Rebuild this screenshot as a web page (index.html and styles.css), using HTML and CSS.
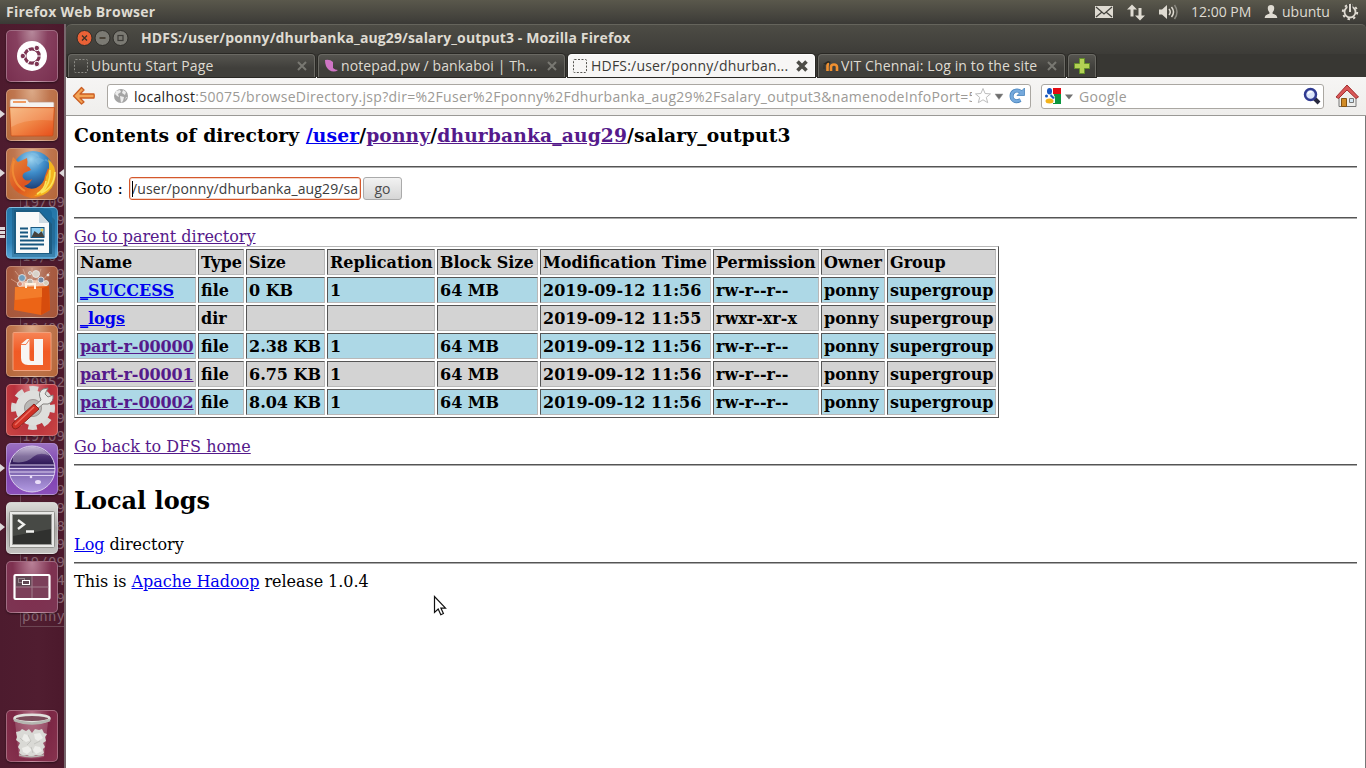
FILE: index.html
```html
<!DOCTYPE html>
<html lang="en">
<head>
<meta charset="utf-8">
<title>HDFS:/user/ponny/dhurbanka_aug29/salary_output3</title>
<link rel="stylesheet" href="styles.css">
</head>
<body>
<header class="panel">
  <span class="panel-title">Firefox Web Browser</span>
  <svg class="panel-icons" width="70" height="24" viewBox="0 0 70 24">
    <rect x="1" y="6" width="18" height="12" fill="#dfdbd2"/>
    <path d="M2 7l8 7 8-7M2 17l6-5M18 17l-6-5" fill="none" stroke="#45443e" stroke-width="1.3"/>
    <path d="M37.500 4.500l-5 5h3.500v7h3v-7h3.500z" fill="#dfdbd2" transform="translate(.5 0)"/>
    <path d="M46 20.500l-5-5h3.500v-7.500h3v7.500h3.500z" fill="#dfdbd2"/>
  </svg>
  <svg class="panel-sound" width="22" height="24" viewBox="0 0 22 24">
    <path d="M1 9.500h3l5-4.500v14l-5-4.500H1z" fill="#dfdbd2"/>
    <path d="M11 9q2.500 3 0 6M13.500 7q4 5 0 10" fill="none" stroke="#dfdbd2" stroke-width="1.500"/>
    <path d="M16.500 5q5 7 0 14" fill="none" stroke="#8b8981" stroke-width="1.500"/>
  </svg>
  <span class="clock">12:00 PM</span>
  <svg class="panel-user" width="14" height="24" viewBox="0 0 14 24">
    <path d="M7 5c-2.200 0-3.400 1.500-3.200 3.500.1 2 .8 3 1.600 3.700v1.500C3 14.500.9 15 .7 18h12.600c-.2-3-2.300-3.500-4.700-4.300v-1.500c.8-.7 1.500-1.700 1.600-3.700C10.400 6.500 9.200 5 7 5z" fill="#dfdbd2"/>
  </svg>
  <span class="user">ubuntu</span>
  <svg class="panel-gear" width="18" height="24" viewBox="0 0 18 24">
    <circle cx="9" cy="12" r="5.500" fill="none" stroke="#dfdbd2" stroke-width="1.800"/>
    <circle cx="9" cy="12" r="7.200" fill="none" stroke="#dfdbd2" stroke-width="2" stroke-dasharray="2.400 3.250"/>
    <rect x="6.500" y="4" width="5" height="6" fill="#45443e"/>
    <path d="M9 4v8" stroke="#dfdbd2" stroke-width="2"/>
  </svg>
</header>

<div class="desktop">
<nav class="launcher">
  <div class="ghost"><i>19/09</i><i>19/09</i><i>19/09</i><i>19/09</i><i>19/09</i><i>19/09</i><i>19/09</i><i>19/09</i><i>19/09</i><i>19/09</i><i>20952</i><i>19/09</i><i>19/09</i><i>19/09</i><i>19/09</i><i>19/09</i><i>19/09</i><i>19/09</i><i>&nbsp;&nbsp;&nbsp;&nbsp;8</i><i>19/09</i><i>19/09</i><i>&nbsp;1264</i><i>19/09</i><i>ponny</i></div>
  <div class="tile t-dash"><svg viewBox="0 0 52 52">
    <circle cx="26" cy="26" r="15" fill="#fff"/>
    <circle cx="26" cy="26" r="7.200" fill="none" stroke="#7d3553" stroke-width="3.200"/>
    <g stroke="#fff" stroke-width="1.200"><path d="M26 26h9M26 26l-4.500-7.800M26 26l-4.500 7.800"/></g><circle cx="26" cy="26" r="5" fill="#fff"/>
    <g fill="#7d3553" stroke="#fff" stroke-width="1"><circle cx="16.800" cy="26" r="2.700"/><circle cx="30.800" cy="18" r="2.700"/><circle cx="30.800" cy="34" r="2.700"/></g>
  </svg></div>
  <div class="tile t-orange run"><svg viewBox="0 0 52 52">
    <defs><linearGradient id="fold" x1="0" y1="0" x2="1" y2="1"><stop offset="0" stop-color="#f6b173"/><stop offset=".5" stop-color="#f08545"/><stop offset="1" stop-color="#e64d19"/></linearGradient></defs>
    <path d="M4 18v-6q0-2 2-2h14q2 0 3 3h24q1 0 1 1v5z" fill="#f5f3f1" stroke="#b98e78" stroke-width=".7"/>
    <rect x="7" y="12" width="13" height="2" fill="#ef9b62"/>
    <path d="M3.500 18.500h45L47 46q0 1-1 1H6q-1 0-1-1z" fill="url(#fold)" stroke="#c8501c" stroke-width=".8"/>
    <path d="M4.500 19.500h43l-.7 12Q20 29 5.300 38z" fill="#fff" opacity=".15"/>
  </svg></div>
  <div class="tile t-orange run active"><svg viewBox="0 0 52 52">
    <defs><radialGradient id="globe" cx=".45" cy=".2" r=".85"><stop offset="0" stop-color="#9fd5f0"/><stop offset=".4" stop-color="#3e8cc9"/><stop offset="1" stop-color="#10275f"/></radialGradient>
    <linearGradient id="fox" x1="0" y1="0" x2="1" y2="1"><stop offset="0" stop-color="#e98a3a"/><stop offset=".5" stop-color="#dd5420"/><stop offset="1" stop-color="#f2a01f"/></linearGradient></defs>
    <circle cx="27" cy="23.500" r="20.500" fill="url(#globe)"/>
    <path d="M24 5q8-1 9 4l-5 3 4 5 8-6 6 5" fill="#8fc8e8" opacity=".35"/>
    <path d="M7 9l5 5q5-2 9-4 1 4 0 8 3 1 4 4l-7 3q-3 3 0 6 3 3 8 0-2 5-8 7 5 4 12 2 8-4 9-12l3-8 3 5q2 14-5 20-6 5-15 5Q11 47 5 37 1 28 7 9z" fill="url(#fox)"/>
    <path d="M40 29q5-8 2-18 8 6 7.500 18-1.500 13-12.500 18l-9 1q12-6 12-19z" fill="#f4b51e"/>
    <path d="M44 22q1 14-9 23 13-5 14-21M40 33q-1 8-9 13" fill="none" stroke="#fbe45b" stroke-width="1.600"/>
    <path d="M8 13q-3 10 1 19 3 7 10 11" fill="none" stroke="#f08a35" stroke-width="2"/>
  </svg></div>
  <div class="tile t-blue many"><svg viewBox="0 0 52 52">
    <path d="M6 1h31l12 12v37H6z" fill="#164b6b" opacity=".35"/>
    <path d="M8 3h27l11 13v31H8z" fill="#1d5c82"/>
    <path d="M10 5h23l10 11v30H10z" fill="#f9fafa"/>
    <path d="M32 2l14 15V7q0-5-5-5z" fill="#1a6a9d"/><path d="M33 5v11h10z" fill="#cfdce4"/>
    <path d="M14 21.500h8M14 25.500h8M14 29.500h8M14 33.500h24M14 37.500h24M14 41.500h18" stroke="#17567f" stroke-width="2"/>
    <rect x="25" y="20.500" width="13" height="10" fill="#8ccdf2" stroke="#17567f"/>
    <path d="M25.500 30l3-6 4 3 3-3 3 6z" fill="#46423d"/><circle cx="36" cy="23" r="1.500" fill="#eecb55"/>
  </svg></div>
  <div class="tile t-brown"><svg viewBox="0 0 52 52">
    <path d="M26 26L9 5m17 21L17 3m9 23L26 2m0 24L35 3m-9 23L44 6M26 26L5 13" stroke="#e8b79e" stroke-width="1" opacity=".6"/>
    <ellipse cx="27" cy="20" rx="14" ry="6" fill="#ffe0ca" opacity=".75"/>
    <g stroke="#eee" stroke-width=".8"><circle cx="16" cy="12" r="3.500" fill="#729ebc"/><circle cx="24" cy="16" r="3" fill="#bab5ac"/><circle cx="30" cy="8" r="3.500" fill="#d8d2c9"/><circle cx="35" cy="14" r="3" fill="#7789a2"/><circle cx="14" cy="18" r="2.500" fill="#d98c76"/><circle cx="40" cy="17" r="2.500" fill="#d4ccb8"/><circle cx="24" cy="7" r="1.500" fill="#bcaa9b"/><circle cx="42" cy="9" r="1" fill="#ddd"/></g>
    <path d="M9 21l34-1 1 24-9 5L8 44z" fill="#ec6416"/><path d="M36 22l7-2 1 24-9 5z" fill="#d64c0d"/>
    <path d="M9 21l27 1v9L9 34z" fill="#f37c2a"/>
    <path d="M20 22v-4h9v5" fill="none" stroke="#fff2df" stroke-width="2"/>
  </svg></div>
  <div class="tile t-orange"><svg viewBox="0 0 52 52">
    <defs><linearGradient id="one" x1="0" y1="0" x2="0" y2="1"><stop offset="0" stop-color="#f68455"/><stop offset=".5" stop-color="#f15a25"/><stop offset="1" stop-color="#ef6129"/></linearGradient></defs>
    <rect x="7" y="7.500" width="38" height="38" rx="1" fill="url(#one)" stroke="#f1a17c"/>
    <path d="M15 19l6-5h2.500v20q0 2 2 2h2.500V14h9v26H22q-7 0-7-7z" fill="#f8f5f3"/><path d="M15 19.500h5l3.500-5" fill="none" stroke="#f15a25" stroke-width=".8"/>
  </svg></div>
  <div class="tile t-red"><svg viewBox="0 0 52 52">
    <circle cx="27" cy="24" r="19" fill="none" stroke="#d9d9d7" stroke-width="6" stroke-dasharray="8.500 6.420" stroke-dashoffset="4"/>
    <circle cx="27" cy="24" r="13" fill="none" stroke="#dededc" stroke-width="9"/>
    <circle cx="27" cy="24" r="8.500" fill="#b9b8b6" stroke="#9c9a98"/>
    <path d="M27 23l8-7q-4-8 2-11l5-1-3 6 3 3 5-2q1 7-5 9l-5 0-7 6z" fill="#e8e8e6" stroke="#83817f" stroke-width="1"/>
    <path d="M28 20l5 5-21 19q-3 2-5 0-2-3 0-5z" fill="#cf3127" stroke="#8f211b"/><path d="M28 23L9 41" stroke="#ed6b5e" stroke-width="1.500"/>
  </svg></div>
  <div class="tile t-purple run"><svg viewBox="0 0 52 52">
    <defs><linearGradient id="ecl" x1="0" y1="0" x2="0" y2="1"><stop offset="0" stop-color="#b9a6cf"/><stop offset=".22" stop-color="#4f3575"/><stop offset=".4" stop-color="#2d1856"/><stop offset=".52" stop-color="#7a62ab"/><stop offset="1" stop-color="#b39be3"/></linearGradient></defs>
    <circle cx="26" cy="26" r="23" fill="url(#ecl)" stroke="#d9cdeb" stroke-width="1"/>
    <path d="M7 13Q16 3 28 4q10 1 16 9-10-5-17 1-7 7-20 5z" fill="#fff" opacity=".3"/>
    <path d="M3.500 22h45M3 25.500h46M3 29h46M4 32.500h44" stroke="#ddcff0" stroke-width="1.200"/>
    <ellipse cx="32" cy="39" rx="3" ry="2" fill="#e9ddf8"/><circle cx="25" cy="34" r="1.300" fill="#e9ddf8"/>
  </svg></div>
  <div class="tile t-grey run"><svg viewBox="0 0 52 52">
    <rect x="3.500" y="9.500" width="45" height="36" rx="1" fill="#e9e9e7" stroke="#92928e"/>
    <rect x="6.500" y="12.500" width="39" height="30" fill="#30312f" stroke="#9b9b98"/>
    <path d="M7 13h38v14L7 34z" fill="#5b5c58" opacity=".55"/>
    <path d="M12 18l6 4.500-6 4.500M20 29.500h8" fill="none" stroke="#f1f1ef" stroke-width="2.300"/>
  </svg></div>
  <div class="tile t-wine"><svg viewBox="0 0 52 52">
    <rect x="8.500" y="14" width="35" height="24" rx="1" fill="#7c405a" stroke="#fff" stroke-width="2.200"/>
    <rect x="10" y="15.500" width="15.500" height="10" fill="#5f4853"/>
    <path d="M26 15v22M10 26h32.500" stroke="#a07e8c" stroke-width="1"/>
    <rect x="12.500" y="17.500" width="6" height="4" fill="none" stroke="#97858c"/><rect x="16.500" y="19.500" width="7" height="4" fill="#5f4853" stroke="#fff"/>
  </svg></div>
  <div class="tile t-trash"><svg viewBox="0 0 52 52">
    <path d="M9 12l4 35q13 3 25 0l4-35z" fill="#d5a5b3" opacity=".3"/>
    <path d="M10 22l4-1 2-2 4 2 3-2 3 4 3-4 4 1 3-1 2 4 3 1-2 3 1 4-3 2 2 4-2 2 1 4-4 3-4-1-5 2-4-2-4 1-4-3 1-3-2-3 2-4-4-3 1-3z" fill="#d9d9d5"/>
    <path d="M18 24l4 1 3 5-5 2-4-3zM28 24l6-1 3 5-5 3-3-2zM16 38l6-2 4 4-5 4-4-2zM29 36l5 1 2 4-6 3-3-4z" fill="#ededea"/>
    <path d="M22 25l3 6-4 4M34 31l-6 3M25 37l2 6M14 28l3 3" fill="none" stroke="#bdbdb8" stroke-width=".8"/>
    <path d="M13 45q12 3.500 25 0" fill="none" stroke="#b7b5b1" stroke-width="1.500"/>
    <ellipse cx="26" cy="8.500" rx="17.500" ry="3.800" fill="#7b4b5a" stroke="#e2e2de" stroke-width="2.500"/>
    <path d="M8 10q18 7 36 0" fill="none" stroke="#b5b7b1" stroke-width="2.500"/>
  </svg></div>
</nav>

<main class="window">
  <div class="titlebar">
    <svg class="wm" width="56" height="18" viewBox="0 0 56 18">
      <g stroke="#2f2e2a"><circle cx="8.500" cy="9" r="7.500" fill="#ea6136"/><circle cx="26.500" cy="9" r="7.500" fill="#7b7a73"/><circle cx="44.500" cy="9" r="7.500" fill="#7b7a73"/></g>
      <path d="M6 6.500l5 5m0-5l-5 5M23.500 9h6" stroke="#3b3226" stroke-width="1.300"/><rect x="42" y="6.500" width="5" height="5" fill="none" stroke="#3c3b37" stroke-width="1.200"/>
    </svg>
    <span class="win-title">HDFS:/user/ponny/dhurbanka_aug29/salary_output3 - Mozilla Firefox</span>
  </div>
  <div class="tabs">
    <div class="tab"><svg width="16" height="16" viewBox="0 0 16 16"><rect x="1.500" y="1.500" width="13" height="13" rx="1" fill="none" stroke="#8b8a84" stroke-dasharray="2 1.500"/></svg><span class="tab-text tx1">Ubuntu Start Page</span><svg class="x" width="12" height="12" viewBox="0 0 12 12"><path d="M2 2l8 8m0-8l-8 8"/></svg></div>
    <div class="tab"><svg width="16" height="16" viewBox="0 0 16 16"><path d="M2 2q5-1 8 2v6q2 2 5 2-4 3-9 0-4-3-4-10z" fill="#cf75c5"/></svg><span class="tab-text tx2">notepad.pw / bankaboi | Th...</span><svg class="x" width="12" height="12" viewBox="0 0 12 12"><path d="M2 2l8 8m0-8l-8 8"/></svg></div>
    <div class="tab current"><svg width="16" height="16" viewBox="0 0 16 16"><rect x="1.500" y="1.500" width="13" height="13" rx="1" fill="none" stroke="#55544f" stroke-dasharray="2 1.500"/></svg><span class="tab-text tx3">HDFS:/user/ponny/dhurban...</span><svg class="x" width="14" height="14" viewBox="0 0 14 14"><path d="M2.500 2.500l9 9m0-9l-9 9"/></svg></div>
    <div class="tab"><svg width="16" height="16" viewBox="0 0 16 16"><path d="M0 6l5-3 3 1-4 3z" fill="#292823"/><path d="M1 7v4" stroke="#302e28"/><path d="M4.500 13V8q0-2 1.500-2M8 13V9q0-2.500 3-2.500T14 9v4" fill="none" stroke="#f09030" stroke-width="2.600"/></svg><span class="tab-text tx4">VIT Chennai: Log in to the site</span><svg class="x" width="12" height="12" viewBox="0 0 12 12"><path d="M2 2l8 8m0-8l-8 8"/></svg></div>
    <div class="tab plus"><svg width="16" height="16" viewBox="0 0 16 16"><path d="M5.500.5h5v5h5v5h-5v5h-5v-5h-5v-5h5z" fill="#b3d154" stroke="#65902a"/></svg></div>
  </div>
  <div class="toolbar">
    <svg class="back" width="24" height="20" viewBox="0 0 24 20"><path d="M9.500 1.500L1.500 10l8 8 2.500-2-4-4H22q.5-2 0-4H8l4-4z" fill="#f3a456" stroke="#cb5e23" stroke-width="1.300" stroke-linejoin="round"/></svg>
    <div class="urlbar">
      <svg class="world" width="16" height="16" viewBox="0 0 16 16"><circle cx="8" cy="8" r="7" fill="#a4a4a4"/><path d="M3 3l4-1 1 2-3 2 1 3-2-1-2-2zM7 8l4 1-1 4-2 2zM10 2l3 2-1 3-3-2zM13 9l1 0-2 3z" fill="#ececec"/></svg>
      <span class="url"><b>localhost</b>:50075/browseDirectory.jsp?dir=%2Fuser%2Fponny%2Fdhurbanka_aug29%2Fsalary_output3&amp;namenodeInfoPort=50070</span>
      <svg class="url-icons" width="54" height="20" viewBox="0 0 54 20">
        <path d="M8 2.500l2.100 5 5.400.4-4.200 3.500 1.400 5.300L8 13.800l-4.700 2.900 1.400-5.300L.5 7.900l5.400-.4z" fill="#fff" stroke="#bdbdbd"/>
        <path d="M20 8h8l-4 5.500z" fill="#6d6d6d" stroke="#999" stroke-width=".5"/>
        <path d="M46 6q-3-2.500-6.500-1-4 2.500-2.500 7.500 3 4.500 8.500 1.500" fill="none" stroke="#4a85bd" stroke-width="4"/><path d="M49.500 2v7.500H42z" fill="#75a9dc" stroke="#4a85bd" stroke-width=".8"/><path d="M46.500 6.500q-3-3-7-1.500-4 2.500-2.500 7.500 3 4.500 8.500 1.500" fill="none" stroke="#75a9dc" stroke-width="2.500"/>
      </svg>
    </div>
    <div class="search">
      <svg width="30" height="18" viewBox="0 0 30 18"><path d="M8 1h8v6H8z" fill="#e40a12"/><path d="M9 7h7v10H8V9z" fill="#0b963f"/><path d="M0 1h8v6l2 3v6H0z" fill="#fff"/><ellipse cx="4.500" cy="4.200" rx="2.500" ry="3.200" fill="#1757c0"/><path d="M6 7l4 4-2 1-3-3z" fill="#1757c0"/><circle cx="1.500" cy="9" r="1.500" fill="#1757c0"/><ellipse cx="4.500" cy="14" rx="4" ry="2.500" fill="#f3b21a"/><path d="M20 7.500h8L24 12.500z" fill="#717171"/></svg>
      <span class="ph">Google</span>
      <svg width="18" height="18" viewBox="0 0 18 18"><path d="M11 11l5 5" stroke="#28293e" stroke-width="4"/><circle cx="7.500" cy="7.500" r="5.500" fill="#dce6fb" stroke="#303b91" stroke-width="2.500"/><path d="M5 7q1-3 4-2" stroke="#fff" stroke-width="1.500" fill="none"/></svg>
    </div>
    <svg class="home" width="24" height="24" viewBox="0 0 24 24"><path d="M4 11v11.500h17V11l-8.500-8z" fill="#eeeeeb" stroke="#777"/><path d="M1 13L12 1l11.500 12-2.500 1.500-9-8.500-8.500 8.500z" fill="#d95757" stroke="#a22f2f" stroke-linejoin="round"/><path d="M6.500 22.500v-8h5v8z" fill="#d18b26" stroke="#845313"/><path d="M14.500 14.500h4v4h-4z" fill="#d3e6f2" stroke="#777"/></svg>
  </div>
  <section class="page">
    <h3 class="contents"><span>Contents of directory <a href="#">/user</a>/<a href="#" class="v">ponny</a>/<a href="#" class="v">dhurbanka_aug29</a>/salary_output3</span></h3>
    <hr>
    <form class="goto"><label>Goto :</label><span class="field"><span class="caret"></span>/user/ponny/dhurbanka_aug29/sa</span><button type="button">go</button></form>
    <hr>
    <p class="parent"><a href="#" class="v">Go to parent directory</a></p>
    <table>
      <colgroup><col class="c1"><col class="c2"><col class="c3"><col class="c4"><col class="c5"><col class="c6"><col class="c7"><col class="c8"><col class="c9"></colgroup>
      <tr><td>Name</td><td>Type</td><td>Size</td><td>Replication</td><td>Block Size</td><td>Modification Time</td><td>Permission</td><td>Owner</td><td>Group</td></tr>
      <tr class="b"><td><a href="#">_SUCCESS</a></td><td>file</td><td>0 KB</td><td>1</td><td>64 MB</td><td>2019-09-12 11:56</td><td>rw-r--r--</td><td>ponny</td><td>supergroup</td></tr>
      <tr><td><a href="#">_logs</a></td><td>dir</td><td></td><td></td><td></td><td>2019-09-12 11:55</td><td>rwxr-xr-x</td><td>ponny</td><td>supergroup</td></tr>
      <tr class="b"><td><a href="#" class="v part">part-r-00000</a></td><td>file</td><td>2.38 KB</td><td>1</td><td>64 MB</td><td>2019-09-12 11:56</td><td>rw-r--r--</td><td>ponny</td><td>supergroup</td></tr>
      <tr><td><a href="#" class="v part">part-r-00001</a></td><td>file</td><td>6.75 KB</td><td>1</td><td>64 MB</td><td>2019-09-12 11:56</td><td>rw-r--r--</td><td>ponny</td><td>supergroup</td></tr>
      <tr class="b"><td><a href="#" class="v part">part-r-00002</a></td><td>file</td><td>8.04 KB</td><td>1</td><td>64 MB</td><td>2019-09-12 11:56</td><td>rw-r--r--</td><td>ponny</td><td>supergroup</td></tr>
    </table>
    <p class="dfs"><a href="#" class="v">Go back to DFS home</a></p>
    <hr>
    <h2>Local logs</h2>
    <p class="log"><a href="#">Log</a> directory</p>
    <hr>
    <p class="release">This is <a href="#">Apache Hadoop</a> release 1.0.4</p>
  </section>
</main>
</div>
<svg class="cursor" width="14" height="22" viewBox="0 0 14 22"><path d="M1.500 1.500v16l3.700-3.400 2.600 5.600 2.600-1.200-2.500-5.400h4.600z" fill="#fff" stroke="#111" stroke-width="1.200"/></svg>
</body>
</html>
```
FILE: styles.css
```css
* { box-sizing: border-box; }
body { margin: 0; width: 1366px; height: 768px; overflow: hidden; background: #3c3b37; font-family: "Open Sans", "Noto Sans", sans-serif; font-size: 14px; }
.panel { display: flex; align-items: center; height: 24px; padding: 0 7px 0 6px; background: linear-gradient(#5a584c, #403f3a 85%, #3a3935); color: #dfdbd2; white-space: nowrap; }
.panel span { padding-bottom: 1px; }
.panel svg { flex: none; }
.panel-title { font-weight: 700; width: 1088px; font-size: 14px; letter-spacing: .25px; }
.panel-icons { width: 70px; }
.panel-sound { margin-left: -6px; }
.clock { width: 62px; margin-left: 11px; }
.panel-user { margin-left: 11px; }
.user { width: 48px; margin-left: 4px; }
.panel-gear { margin-left: auto; }
.desktop { display: flex; height: 744px; }
.launcher { position: relative; flex: none; width: 66px; background: linear-gradient(90deg, #4d1b2e, #501d30 60%, #4c192c); border-right: 2px solid #77666c; padding: 6px 0 0 6px; display: flex; flex-direction: column; gap: 7px; }
.ghost { position: absolute; left: 20px; top: 169px; width: 44px; height: 434px; border-left: 1px solid #6c4653; border-bottom: 1px solid #6c4653; font: 14px/18px "DejaVu Sans Mono", monospace; letter-spacing: .2px; color: #85636f; padding-left: 1px; }
.ghost i { display: block; font-style: normal; height: 18px; white-space: nowrap; }
.tile { position: relative; flex: none; width: 52px; height: 52px; border-radius: 5px; border: 1px solid rgba(255,255,255,.28); box-shadow: 0 1px 2px rgba(0,0,0,.45); }
.tile svg { display: block; width: 52px; height: 52px; margin: -1px; }
.t-dash { background: radial-gradient(ellipse at 50% 0, #b78a9c, #87405f 45%, #782f4f); }
.t-orange { background: radial-gradient(ellipse at 50% 0, #dcaa88, #bf764f 50%, #b56739); }
.t-blue { background: linear-gradient(#2476a8, #2f82b7 70%, #58a6d6); }
.t-brown { background: radial-gradient(ellipse at 50% 0, #c39482, #a85c42 55%, #a65639); }
.t-red { background: radial-gradient(ellipse at 50% 0, #d97a80, #b8303c 50%, #c94543); }
.t-purple { background: linear-gradient(#9a6fc0, #7d3fb0 50%, #8a4fba); }
.t-grey { background: linear-gradient(#dadad7, #aaa8a6 50%, #c3c2c0); }
.t-wine { background: radial-gradient(ellipse at 50% 0, #b98298, #7e3150 55%, #7c3553); }
.t-trash { margin-top: 90px; background: radial-gradient(ellipse at 50% 0, #b06980, #7b2644 50%, #87334f); }
.run::before, .active::after { content: ""; position: absolute; top: 20px; left: -7px; border: 4px solid transparent; border-left: 5px solid #ddd8da; border-right: 0; }
.active::after { left: 52px; border-left: 0; border-right: 5px solid #ddd8da; }
.many::before { content: ""; position: absolute; left: -7px; top: 19px; width: 5px; height: 11px; background: repeating-linear-gradient(#ddd8da 0 3px, transparent 3px 4px); }
.window { flex: 1; min-width: 0; background: #3c3b37; border-radius: 6px 0 0 0; }
.titlebar { display: flex; align-items: center; height: 30px; padding: 0 0 3px 10px; border-top: 1px solid #65645c; border-radius: 6px 5px 0 0; background: linear-gradient(#4d4c45, #3d3c38); }
.wm { flex: none; width: 56px; }
.win-title { margin-left: 9px; padding-bottom: 1px; color: #dfdbd2; font-weight: 700; white-space: nowrap; font-size: 14px; letter-spacing: .125px; }
.tabs { display: flex; gap: 3px; height: 23px; padding-left: 2px; background: #383733; }
.tab { display: flex; align-items: center; width: 247px; height: 23px; padding: 0 6px 1px 4px; border: 1px solid #6a6963; border-bottom: 0; border-radius: 4px 4px 0 0; background: linear-gradient(#55544f, #403f3b 60%); color: #dfdbd2; box-shadow: 0 0 0 1px #292824; }
.tab svg { flex: none; }
.tab-text { flex: 1; margin-left: 2px; padding-bottom: 1px; white-space: nowrap; overflow: hidden; }
.tx1 { letter-spacing: .17px; }
.tx2 { letter-spacing: .1px; }
.tx3 { letter-spacing: .2px; }
.tx4 { letter-spacing: .12px; }
.x { stroke: #797872; stroke-width: 2; }
.current { background: #f7f6f5; border-color: #fff; color: #3c3b37; padding-right: 5px; }
.current svg:first-child { margin-left: -1px; margin-right: 1px; }
.current .x { stroke: #4d4c47; stroke-width: 3.600; }
.plus { width: 28px; padding: 0 0 1px; justify-content: center; }
.toolbar { display: flex; align-items: center; height: 39px; padding: 0 6px; border-bottom: 1px solid #9a9996; background: linear-gradient(#f6f5f4, #efeeec); }
.back { flex: none; }
.urlbar, .search { display: flex; flex: none; align-items: center; height: 25px; border: 1px solid #aaa7a2; border-radius: 3px; background: #fff; }
.urlbar { width: 924px; margin-left: 11px; padding: 0 0 0 5px; }
.world { flex: none; }
.url { flex: none; width: 838px; margin-left: 5px; white-space: nowrap; overflow: hidden; color: #9c9a96; letter-spacing: .285px; }
.url b { font-weight: 400; color: #222; }
.url-icons { flex: none; margin-left: 3px; }
.search { width: 283px; margin-left: 10px; padding: 0 2px 0 3px; color: #9c9a96; }
.search svg { flex: none; }
.ph { flex: 1; margin-left: 4px; letter-spacing: .3px; }
.home { flex: none; margin-left: 11px; }
.page { display: flow-root; height: 652px; padding: 0 8px; background: #fff; color: #000; font: 16px/19px "DejaVu Serif", serif; border-right: 1px solid #777; }
.page p { margin: 0; white-space: nowrap; }
a { color: #00e; text-decoration: underline; }
a.v { color: #551a8b; }
a.part { letter-spacing: -.1px; }
hr { margin: 0; height: 2px; border: 0; border-top: 1px solid #555; border-bottom: 1px solid #aaa; }
.contents { margin: 0; height: 50px; padding-top: 8px; font: bold 18.720px/22px "DejaVu Serif", serif; letter-spacing: .11px; white-space: nowrap; }
.goto { display: flex; align-items: center; height: 49px; padding-bottom: 9px; }
.goto label { width: 55px; white-space: nowrap; }
.field { position: relative; width: 232px; height: 23px; border: 1px solid #d4582c; border-radius: 3px; padding-left: 2px; font: 14px/21px "Open Sans", sans-serif; letter-spacing: .12px; color: #3c3c3c; white-space: nowrap; box-shadow: inset 0 0 0 1px #f5d5c8; }
.caret { position: absolute; left: 2px; top: 3px; width: 1px; height: 16px; background: #000; }
.goto button { width: 39px; height: 23px; margin: 0 0 0 2px; padding: 0; border: 1px solid #aaa; border-radius: 3px; background: linear-gradient(#f2f2f2, #d6d6d6); color: #4c4c4c; font: 14px/19px "Open Sans", sans-serif; }
.parent { height: 27px; padding-top: 8px; }
table { table-layout: fixed; width: 925px; border: 1px solid; border-color: #b8b8b8 #555 #555 #b8b8b8; border-spacing: 2px; font-weight: bold; }
td { height: 26px; padding: 0 0 0 2px; border: 1px solid; border-color: #555 #b8b8b8 #b8b8b8 #555; background: #d3d3d3; white-space: nowrap; line-height: 19px; }
.b td { background: #add8e6; }
.c1 { width: 119px; } .c2 { width: 46px; } .c3 { width: 79px; } .c4 { width: 108px; } .c5 { width: 101px; } .c6 { width: 171px; } .c7 { width: 106px; } .c8 { width: 64px; } .c9 { width: 109px; }
.dfs { height: 46px; padding-top: 19px; }
h2 { margin: 0; height: 69px; padding-top: 20px; font: bold 24px/29px "DejaVu Serif", serif; }
.log { height: 27px; }
.release { padding-top: 8px; letter-spacing: -.04px; }
.cursor { position: absolute; left: 433px; top: 595px; }
```
